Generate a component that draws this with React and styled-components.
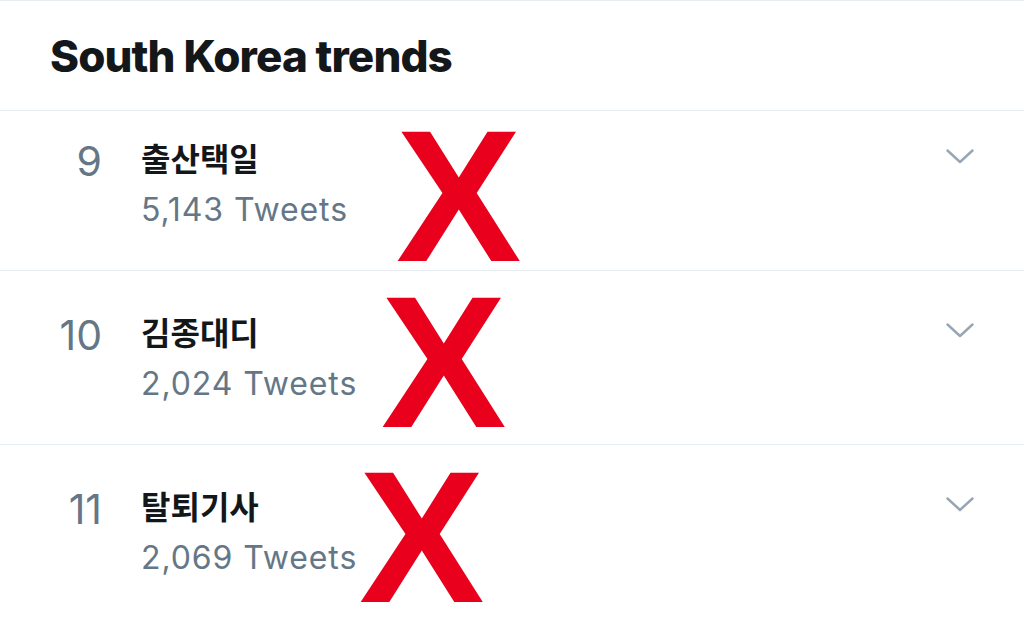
import React from 'react';
import styled, { createGlobalStyle } from 'styled-components';

const GlobalStyle = createGlobalStyle`
    html, body {
        margin: 0;
        padding: 0;
        background: #fff;
    }
    body {
        font-family: Inter, "Noto Sans", "Noto Sans CJK KR", sans-serif;
        -webkit-font-smoothing: antialiased;
    }
`;

const Page = styled.div`
    width: 1024px;
    height: 617px;
    overflow: hidden;
    background: #fff;
`;

const Header = styled.header`
    box-sizing: border-box;
    height: 111px;
    padding: 33px 0 0 50px;
    border-top: 1px solid #e6ecf0;
    border-bottom: 1px solid #e6ecf0;
`;

const Title = styled.h2`
    margin: 0;
    font-family: Inter, "Liberation Sans", sans-serif;
    font-size: 44px;
    line-height: 44px;
    font-weight: 800;
    letter-spacing: -0.9px;
    color: #14171a;
`;

const Row = styled.div`
    position: relative;
    box-sizing: border-box;
    height: ${({ $clipped }) => ($clipped ? 160 : 174)}px;
    padding-top: ${({ $clipped }) => ($clipped ? 30 : 44)}px;
    display: grid;
    grid-template-columns: 102px 1fr auto;
    column-gap: 39px;
    align-items: start;
    border-bottom: 1px solid #e6ecf0;
`;

const Rank = styled.div`
    text-align: right;
    font-family: Inter, "Liberation Sans", sans-serif;
    font-size: 41px;
    line-height: 41px;
    color: #657786;
`;

const Info = styled.div`
    display: flex;
    flex-direction: column;
    row-gap: 21px;
`;

const Name = styled.div`
    font-family: "Noto Sans CJK KR", "Noto Sans", sans-serif;
    font-size: 32px;
    line-height: 32px;
    font-weight: 700;
    color: #14171a;
`;

const Count = styled.div`
    font-family: Inter, "Liberation Sans", sans-serif;
    font-size: 32px;
    line-height: 31px;
    letter-spacing: 0.9px;
    color: #657786;
`;

const Chevron = styled.svg`
    display: block;
    margin: 8px 50px 0 0;
    width: 28px;
    height: 15px;
`;

const Cross = styled.span`
    position: absolute;
    top: ${({ $top }) => $top}px;
    left: ${({ $left }) => $left}px;
    font-family: "Liberation Sans", Arial, sans-serif;
    font-weight: 700;
    font-size: 188px;
    line-height: 0.75;
    color: #e8001c;
    pointer-events: none;
`;

const trends = [
    { rank: 9, name: '출산택일', tweets: '5,143', cross: { top: 15, left: 396 }, clipped: true },
    { rank: 10, name: '김종대디', tweets: '2,024', cross: { top: 21, left: 381 } },
    { rank: 11, name: '탈퇴기사', tweets: '2,069', cross: { top: 22, left: 359 } },
];

const TrendRow = ({ rank, name, tweets, cross, clipped }) => (
    <Row $clipped={clipped}>
        <Rank>{rank}</Rank>
        <Info>
            <Name>{name}</Name>
            <Count>{tweets} Tweets</Count>
        </Info>
        <Chevron viewBox="0 0 28 15">
            <polyline
                points="1.5,1.5 14,13 26.5,1.5"
                fill="none"
                stroke="#98a6b4"
                strokeWidth="2.4"
                strokeLinecap="round"
                strokeLinejoin="round"
            />
        </Chevron>
        <Cross $top={cross.top} $left={cross.left}>X</Cross>
    </Row>
);

export default function App() {
    return (
        <Page>
            <GlobalStyle />
            <Header>
                <Title>South Korea trends</Title>
            </Header>
            {trends.map(t => <TrendRow key={t.rank} {...t} />)}
        </Page>
    );
}
